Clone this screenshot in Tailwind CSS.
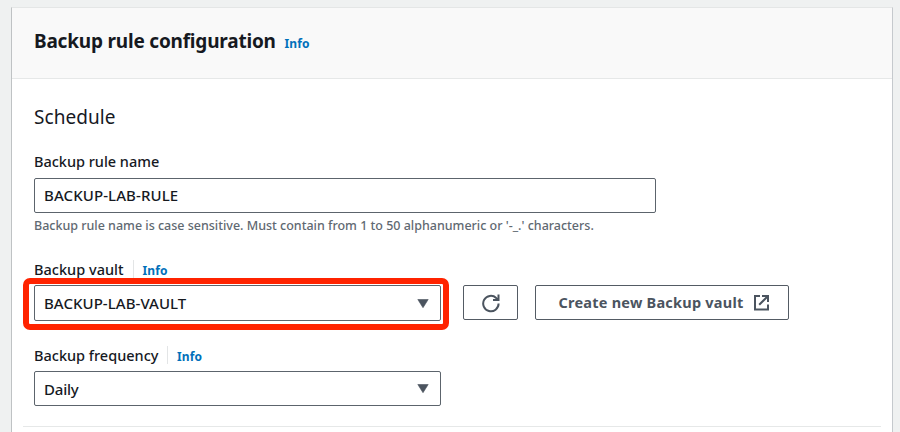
<!DOCTYPE html>
<html lang="en">
<head>
<meta charset="utf-8">
<title>Backup rule configuration</title>
<script src="https://cdn.jsdelivr.net/npm/@tailwindcss/browser@4"></script>
</head>
<body class="h-[432px] overflow-hidden bg-[#eff1f1] pt-[7px] pl-[11px] font-['Noto_Sans',sans-serif] text-[#16191f]">
<main class="h-[440px] w-[882px] border border-t-[#e4e6e6] border-r-[#c5c9cd] border-l-[#bfc2c4] bg-white whitespace-nowrap">
  <header class="flex h-[71px] items-baseline border-b border-[#e6e8e8] bg-[#f9f9f9] px-[22px] pt-[19px]">
    <h1 class="w-[250.5px] text-[19px] leading-[28px] font-bold tracking-[-0.2px]">Backup rule configuration</h1>
    <a class="text-[12px] leading-[20px] font-bold tracking-[0.1px] text-[#0070ba]">Info</a>
  </header>
  <section class="px-[22px] pt-[24px]">
    <h2 class="h-[28px] text-[19px] leading-[28px] tracking-[0.05px]">Schedule</h2>
    <label class="mt-[20px] block h-[20px] text-[14.5px] leading-[20px] font-medium tracking-[-0.02px]">Backup rule name</label>
    <div class="mt-[7px] flex h-[35px] w-[622px] items-center rounded-[2px] border border-[#5c646c] px-[9px] text-[15px] font-medium tracking-[0.1px]">BACKUP-LAB-RULE</div>
    <p class="mt-[3px] h-[20px] text-[12.5px] leading-[20px] font-medium tracking-[-0.01px] text-[#5f6972]">Backup rule name is case sensitive. Must contain from 1 to 50 alphanumeric or '-_.' characters.</p>
    <div class="mt-[23px] flex h-[20px] items-center">
      <span class="w-[99px] text-[14.5px] leading-[20px] font-medium tracking-[0.02px]">Backup vault</span>
      <span class="h-[18px] border-l border-[#e3e5e6] pl-[8.5px] text-[12px] leading-[21px] font-bold tracking-[0.1px] text-[#0070ba]">Info</span>
    </div>
    <div class="mt-[6px] flex h-[36px]">
      <div class="relative flex h-[36px] w-[407px] items-center justify-between rounded-[2px] border border-[#5c646c] pr-[11.5px] pl-[9px] text-[15px] font-medium tracking-[0.05px]">
        <span>BACKUP-LAB-VAULT</span>
        <svg class="h-[9px] w-[12px]" viewBox="0 0 12 9"><path d="M.8.5h10.4L6 8.7z" fill="#4b545f" stroke="#4b545f" stroke-width=".6" stroke-linejoin="round"/></svg>
        <div class="absolute -top-[8.5px] -left-[12px] h-[52px] w-[426px] rounded-[7px] border-[6px] border-[#ff2300]"></div>
      </div>
      <button class="ml-[22px] flex h-[35px] w-[55px] items-center justify-center rounded-[2px] border border-[#545b64]">
        <svg class="h-[20px] w-[20px]" viewBox="0 0 20 20" fill="none" stroke="#4b545f" stroke-width="2"><path d="M17.6 10.6A7.7 7.7 0 1 1 15.2 5L17 6.6"/><path d="M17.5 1.5V7h-5.5"/></svg>
      </button>
      <button class="ml-[17px] flex h-[35px] w-[254px] items-center rounded-[2px] border border-[#545b64] pl-[22.5px] text-[14.5px] font-bold tracking-[0.23px] text-[#4b545f]">
        <span class="w-[194.5px] text-left">Create new Backup vault</span>
        <svg class="h-[17px] w-[17px]" viewBox="0 0 17 17" fill="none" stroke="#4b545f" stroke-width="2"><path d="M7 2H2v13.5h13V10.5M9 2H15v6M15 2 6.2 10.8"/></svg>
      </button>
    </div>
    <div class="mt-[24px] flex h-[20px] items-center">
      <span class="w-[133px] text-[14.5px] leading-[20px] font-medium tracking-[0px]">Backup frequency</span>
      <span class="h-[18px] border-l border-[#e3e5e6] pl-[9px] text-[12px] leading-[21px] font-bold tracking-[0.1px] text-[#0070ba]">Info</span>
    </div>
    <div class="mt-[6px] flex h-[35px] w-[407px] items-center justify-between rounded-[2px] border border-[#5c646c] pr-[11.5px] pl-[9px] text-[15px] font-medium">
      <span class="pt-[2px] tracking-[-0.2px]">Daily</span>
      <svg class="h-[9px] w-[12px]" viewBox="0 0 12 9"><path d="M.8.5h10.4L6 8.7z" fill="#4b545f" stroke="#4b545f" stroke-width=".6" stroke-linejoin="round"/></svg>
    </div>
    <hr class="-mx-[11px] mt-[20px] border-[#e6e8e8]">
  </section>
</main>
</body>
</html>
